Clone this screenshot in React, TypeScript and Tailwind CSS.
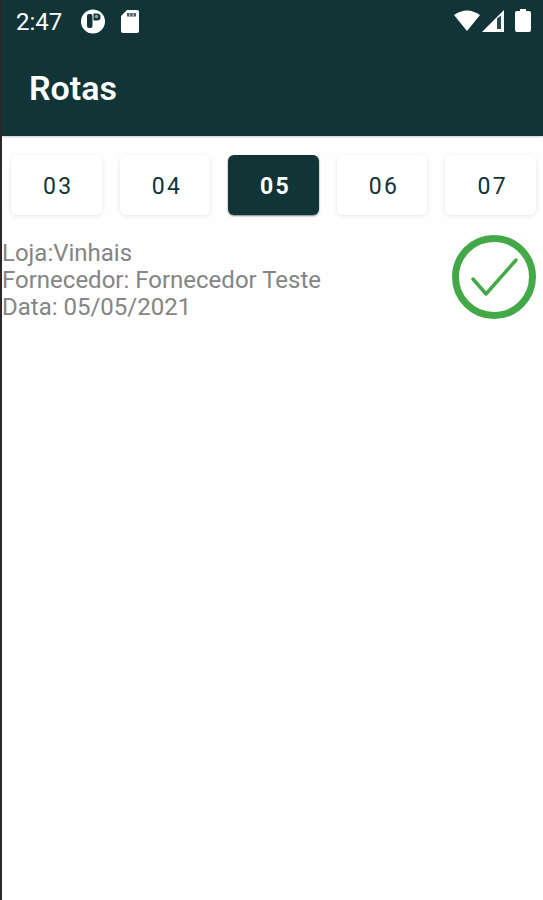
import { useState } from "react";

const days = ["03", "04", "05", "06", "07"];

function StatusBar() {
  return (
    <div className="flex h-11 items-center justify-between pr-3 pl-3.5">
      <div className="flex items-center">
        <span className="w-16 text-2xl leading-7">2:47</span>
        <svg width="26" height="26" viewBox="0 0 26 26" aria-hidden="true">
          <circle cx="13" cy="12.500" r="12" fill="#fff" />
          <rect x="7" y="5" width="5.500" height="14" rx="2" fill="#113436" />
          <path d="M13.500 4.500H17a3.500 3.500 0 0 1 0 7h-3.500z" fill="#113436" />
          <circle cx="16.500" cy="7.500" r="1.800" fill="#8fa0a0" />
        </svg>
        <svg width="20" height="26" viewBox="0 0 20 26" className="ml-3.5" aria-hidden="true">
          <path d="M7 1h10q2 0 2 2v19q0 2-2 2H3q-2 0-2-2V7z" fill="#fff" />
          <path d="M7 4h9v4H7z" fill="#a3afaf" />
          <path d="M7 4h2v3H7zM10.500 4h2v3h-2zM14 4h2v3h-2z" fill="#4a6263" />
        </svg>
      </div>
      <div className="flex items-center">
        <svg width="28" height="26" viewBox="0 0 28 26" aria-hidden="true">
          <path d="M1 6Q14-3 27 6L14 22z" fill="#fff" />
        </svg>
        <svg width="24" height="26" viewBox="0 0 24 26" aria-hidden="true">
          <path d="M23 1v22H1z" fill="#fff" />
          <path d="M16 9.500l4-3V20h-4z" fill="#28494a" />
        </svg>
        <svg width="16" height="26" viewBox="0 0 16 26" className="ml-2.5" aria-hidden="true">
          <path d="M5 0h6v2h3q2 0 2 2v17q0 2-2 2H2q-2 0-2-2V4q0-2 2-2h3z" fill="#fff" />
        </svg>
      </div>
    </div>
  );
}

export default function App() {
  const [selected, setSelected] = useState("05");

  return (
    <div className="min-h-screen border-l-2 border-[#29292b] bg-[#fefefe] font-['Roboto',sans-serif]">
      <header className="bg-[#113436] text-white shadow-[0_1px_2px_rgba(0,0,0,0.2)]">
        <StatusBar />
        <h1 className="px-[27px] pt-6 pb-7 text-[34px] leading-10 font-semibold">Rotas</h1>
      </header>
      <main>
        <nav className="grid grid-cols-5 gap-[18px] pt-[19px] pr-[7px] pl-[9px]" aria-label="Dias">
          {days.map((day) => (
            <button
              key={day}
              type="button"
              aria-pressed={day === selected}
              onClick={() => setSelected(day)}
              className={
                day === selected
                  ? "h-15 rounded-md bg-[#113436] pt-1 pl-1 text-[23px] font-bold tracking-widest text-white shadow-[0_1px_2px_rgba(0,0,0,0.5)]"
                  : "h-15 rounded-md bg-white pt-1 pl-1 text-[23px] tracking-widest text-[#113436] shadow-[0_1px_4px_rgba(0,0,0,0.1)]"
              }
            >
              {day}
            </button>
          ))}
        </nav>
        <section className="flex items-start justify-between pt-5 pr-[7px]">
          <div className="pt-[5px] text-2xl leading-[27px] text-[#858585]">
            <p>Loja:Vinhais</p>
            <p>Fornecedor: Fornecedor Teste</p>
            <p>Data: 05/05/2021</p>
          </div>
          <svg width="84" height="84" viewBox="0 0 84 84" fill="none" stroke="#43a948" role="img" aria-label="Concluído">
            <circle cx="42" cy="42" r="38.500" strokeWidth="7" />
            <path d="M21 44l13 15 30-34" strokeWidth="3.500" strokeLinecap="round" strokeLinejoin="round" />
          </svg>
        </section>
      </main>
    </div>
  );
}
